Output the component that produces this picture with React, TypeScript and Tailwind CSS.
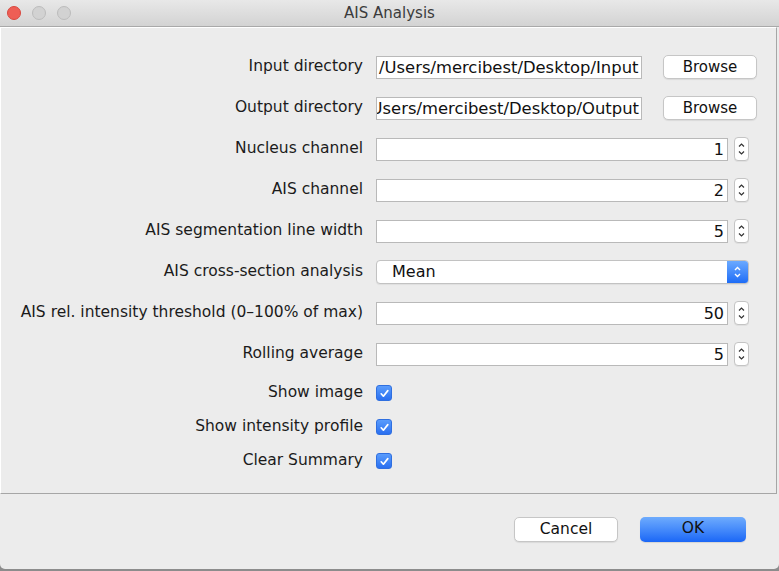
import React from "react";

const font = { fontFamily: '"DejaVu Sans", "Liberation Sans", sans-serif' };

const Spinner = () => (
  <div className="ml-[6px] flex h-[24px] w-[15px] flex-col items-center justify-center rounded-[4px] border border-[#c4c4c4] bg-white shadow-[0_1px_0_rgba(0,0,0,0.05)]">
    <svg width="9" height="18" viewBox="0 0 9 18" fill="none" stroke="#333" strokeWidth="1.2">
      <path d="M2 6.5 L4.5 4 L7 6.5" />
      <path d="M2 11.5 L4.5 14 L7 11.5" />
    </svg>
  </div>
);

const Check = () => (
  <div className="flex h-[16px] w-[16px] items-center justify-center rounded-[3px] bg-gradient-to-b from-[#5a9cfc] to-[#2a6ff0] border border-[#2f6fe0]">
    <svg width="11" height="11" viewBox="0 0 11 11" fill="none" stroke="white" strokeWidth="1.7" strokeLinecap="round" strokeLinejoin="round">
      <path d="M2.2 5.8 L4.4 8.2 L8.8 2.6" />
    </svg>
  </div>
);

const Label = ({ children }: { children: React.ReactNode }) => (
  <div className="w-[362px] shrink-0 whitespace-nowrap text-right text-[15.5px] text-[#1b1b1b]">{children}</div>
);

const NumberRow = ({ label, value }: { label: string; value: string }) => (
  <div className="flex h-[24px] items-center">
    <Label>{label}</Label>
    <div className="ml-[13px] flex items-center">
      <div className="h-[23px] w-[352px] border border-[#b9b9b9] bg-white px-[3px] text-right text-[16px] leading-[21px] text-[#111]">
        {value}
      </div>
      <Spinner />
    </div>
  </div>
);

const BrowseRow = ({ label, value, end }: { label: string; value: string; end?: boolean }) => (
  <div className="flex h-[24px] items-center">
    <Label>{label}</Label>
    <div className="ml-[13px] flex items-center">
      <div
        className={`flex h-[23px] w-[266px] overflow-hidden whitespace-nowrap border border-[#b9b9b9] bg-white px-[2px] text-[16.4px] leading-[21px] text-[#111] ${
          end ? "justify-end" : "justify-start"
        }`}
      >
        <span className="shrink-0">{value}</span>
      </div>
      <button className="ml-[21px] h-[24px] w-[94px] rounded-[5px] border border-[#c6c6c6] bg-white text-[15px] text-[#111] shadow-[0_1px_1px_rgba(0,0,0,0.08)]">
        Browse
      </button>
    </div>
  </div>
);

const CheckRow = ({ label }: { label: string }) => (
  <div className="flex h-[24px] items-center">
    <Label>{label}</Label>
    <div className="ml-[13px]">
      <Check />
    </div>
  </div>
);

export default function App() {
  return (
    <div className="h-[571px] w-[779px] bg-[#8c8c8c]" style={font}>
      <div className="flex h-[569px] w-[779px] flex-col overflow-hidden rounded-b-[5px] bg-[#ececec]">
        {/* Title bar */}
        <div className="relative flex h-[27px] shrink-0 items-center justify-center border-b border-[#a9a9a9] bg-gradient-to-b from-[#e8e8e8] to-[#d3d3d3]">
          <div className="absolute left-[7px] top-[6px] flex gap-[11px]">
            <div className="h-[14px] w-[14px] rounded-full bg-[#ee5e55] border border-[#d8483f]" />
            <div className="h-[14px] w-[14px] rounded-full bg-[#d2d2d2] border border-[#bcbcbc]" />
            <div className="h-[14px] w-[14px] rounded-full bg-[#d2d2d2] border border-[#bcbcbc]" />
          </div>
          <span className="text-[15px] text-[#3b3b3b]">AIS Analysis</span>
        </div>

        {/* Content panel */}
        <div className="mr-[2px] h-[467px] shrink-0 border border-[#a6a6a6] border-l-white border-t-white">
          <div className="flex flex-col pt-[27px]">
            <div className="flex flex-col gap-[17px]">
              <BrowseRow label="Input directory" value="/Users/mercibest/Desktop/Input" />
              <BrowseRow label="Output directory" value="/Users/mercibest/Desktop/Output" end />
              <NumberRow label="Nucleus channel" value="1" />
              <NumberRow label="AIS channel" value="2" />
              <NumberRow label="AIS segmentation line width" value="5" />
              <div className="flex h-[24px] items-center">
                <Label>AIS cross-section analysis</Label>
                <div className="ml-[13px] flex h-[24px] w-[373px] overflow-hidden rounded-[4px] border border-[#c2c2c2] bg-white shadow-[0_1px_1px_rgba(0,0,0,0.06)]">
                  <div className="flex-1 pl-[15px] text-[16px] leading-[22px] text-[#111]">Mean</div>
                  <div className="flex w-[21px] items-center justify-center bg-gradient-to-b from-[#6aa9ff] to-[#1d6cf6]">
                    <svg width="9" height="18" viewBox="0 0 9 18" fill="none" stroke="white" strokeWidth="1.4">
                      <path d="M2 7 L4.5 4.5 L7 7" />
                      <path d="M2 11 L4.5 13.5 L7 11" />
                    </svg>
                  </div>
                </div>
              </div>
              <NumberRow label="AIS rel. intensity threshold (0–100% of max)" value="50" />
              <NumberRow label="Rolling average" value="5" />
            </div>
            <div className="mt-[15px] flex flex-col gap-[10px]">
              <CheckRow label="Show image" />
              <CheckRow label="Show intensity profile" />
              <CheckRow label="Clear Summary" />
            </div>
          </div>
        </div>

        {/* Footer buttons */}
        <div className="flex flex-1 items-center justify-end gap-[22px] pr-[33px] pb-[5px]">
          <button className="h-[25px] w-[104px] rounded-[5px] border border-[#c6c6c6] bg-white text-[15.5px] text-[#111] shadow-[0_1px_1px_rgba(0,0,0,0.08)]">
            Cancel
          </button>
          <button className="h-[25px] w-[106px] rounded-[5px] bg-gradient-to-b from-[#6eabfd] to-[#1a66f6] text-[15.5px] text-[#111] shadow-[0_1px_1px_rgba(0,0,0,0.1)]">
            OK
          </button>
        </div>
      </div>
    </div>
  );
}
